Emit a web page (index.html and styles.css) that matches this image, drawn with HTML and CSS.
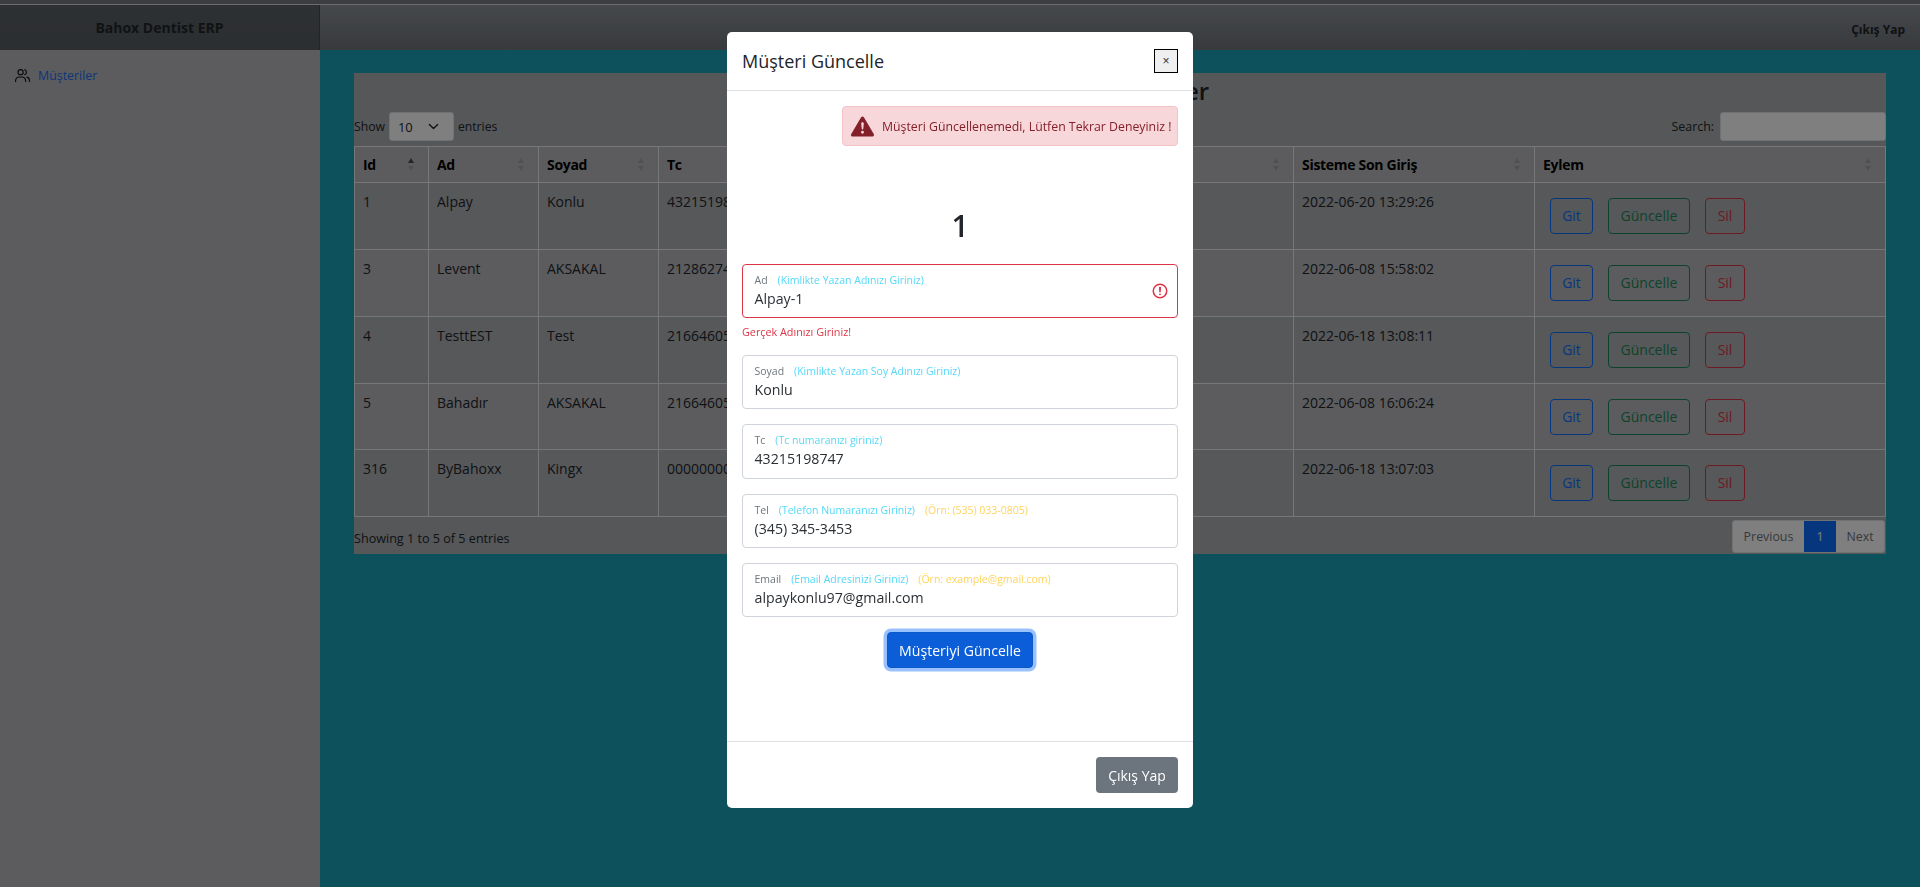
FILE: index.html
```html
<!DOCTYPE html>
<html lang="tr">
<head>
<meta charset="utf-8">
<title>Bahox Dentist ERP</title>
<link rel="stylesheet" href="styles.css">
</head>
<body>
<div class="topstrip"></div>
<div class="app">
  <aside class="sidebar">
    <div class="brand">Bahox Dentist ERP</div>
    <nav class="nav">
      <a class="nav-link" href="#">
        <svg class="nav-icon" viewBox="0 0 15 13" fill="none" stroke="currentColor" stroke-width="1.1" stroke-linecap="round"><circle cx="5.6" cy="3.2" r="2.6"/><path d="M.6 13v-1.4A3.5 3.5 0 0 1 4.1 8h3a3.5 3.5 0 0 1 3.5 3.6V13"/><path d="M9.6.7a2.6 2.6 0 0 1 0 5"/><path d="M12 8.1a3.3 3.3 0 0 1 2.4 3.2V13"/></svg>
        <span>Müşteriler</span>
      </a>
    </nav>
  </aside>
  <div class="main">
    <header class="topbar"><a class="logout" href="#">Çıkış Yap</a></header>
    <section class="content">
      <div class="card">
        <h3 class="card-title">Tüm Müşteriler</h3>
        <div class="controls">
          <div class="length">Show <span class="select">10<svg class="chev" viewBox="0 0 16 16" fill="none" stroke="currentColor" stroke-width="2" stroke-linecap="round" stroke-linejoin="round"><path d="M2 5l6 6 6-6"/></svg></span> entries</div>
          <div class="search">Search: <span class="search-input"></span></div>
        </div>
        <table class="table">
          <colgroup><col class="c1"><col class="c2"><col class="c3"><col class="c4"><col class="c5"><col class="c6"><col class="c8"><col class="c9"></colgroup>
          <thead>
            <tr>
              <th><div class="th"><span>Id</span><i class="sort asc"><b></b><b></b></i></div></th>
              <th><div class="th"><span>Ad</span><i class="sort"><b></b><b></b></i></div></th>
              <th><div class="th"><span>Soyad</span><i class="sort"><b></b><b></b></i></div></th>
              <th><div class="th"><span>Tc</span><i class="sort"><b></b><b></b></i></div></th>
              <th><div class="th"><span>Tel</span><i class="sort"><b></b><b></b></i></div></th>
              <th><div class="th"><span>Email</span><i class="sort"><b></b><b></b></i></div></th>
              <th><div class="th"><span>Sisteme Son Giriş</span><i class="sort"><b></b><b></b></i></div></th>
              <th><div class="th"><span>Eylem</span><i class="sort"><b></b><b></b></i></div></th>
            </tr>
          </thead>
          <tbody>
            <tr class="odd"><td>1</td><td>Alpay</td><td>Konlu</td><td>43215198747</td><td></td><td></td><td>2022-06-20 13:29:26</td><td class="act"><a class="btn blue">Git</a><a class="btn green">Güncelle</a><a class="btn red">Sil</a></td></tr>
            <tr><td>3</td><td>Levent</td><td>AKSAKAL</td><td>21286274000</td><td></td><td></td><td>2022-06-08 15:58:02</td><td class="act"><a class="btn blue">Git</a><a class="btn green">Güncelle</a><a class="btn red">Sil</a></td></tr>
            <tr class="odd"><td>4</td><td>TesttEST</td><td>Test</td><td>21664605000</td><td></td><td></td><td>2022-06-18 13:08:11</td><td class="act"><a class="btn blue">Git</a><a class="btn green">Güncelle</a><a class="btn red">Sil</a></td></tr>
            <tr class="short"><td>5</td><td>Bahadır</td><td>AKSAKAL</td><td>21664605000</td><td></td><td></td><td>2022-06-08 16:06:24</td><td class="act"><a class="btn blue">Git</a><a class="btn green">Güncelle</a><a class="btn red">Sil</a></td></tr>
            <tr class="odd"><td>316</td><td>ByBahoxx</td><td>Kingx</td><td>00000000000</td><td></td><td></td><td>2022-06-18 13:07:03</td><td class="act"><a class="btn blue">Git</a><a class="btn green">Güncelle</a><a class="btn red">Sil</a></td></tr>
          </tbody>
        </table>
        <div class="table-foot">
          <div class="info">Showing 1 to 5 of 5 entries</div>
          <div class="pager"><span class="page prev">Previous</span><span class="page on">1</span><span class="page next">Next</span></div>
        </div>
      </div>
    </section>
  </div>
</div>

<div class="backdrop">
  <div class="modal">
    <div class="modal-head">
      <h5 class="modal-title">Müşteri Güncelle</h5>
      <button class="close" type="button">×</button>
    </div>
    <div class="modal-body">
      <div class="alert">
        <svg class="alert-icon" viewBox="0 0 16 16" fill="currentColor"><path d="M8.982 1.566a1.13 1.13 0 0 0-1.96 0L.165 13.233c-.457.778.091 1.767.98 1.767h13.713c.889 0 1.438-.99.98-1.767L8.982 1.566zM8 5c.535 0 .954.462.9.995l-.35 3.507a.552.552 0 0 1-1.1 0L7.1 5.995A.905.905 0 0 1 8 5zm.002 6a1 1 0 1 1 0 2 1 1 0 0 1 0-2z"/></svg>
        <span>Müşteri Güncellenemedi, Lütfen Tekrar Deneyiniz !</span>
      </div>
      <div class="number">1</div>
      <div class="field invalid">
        <div class="field-label"><span>Ad</span><span class="hint">(Kimlikte Yazan Adınızı Giriniz)</span></div>
        <div class="field-value">Alpay-1</div>
        <svg class="invalid-icon" viewBox="0 0 12 12" fill="none" stroke="#dc3545"><circle cx="6" cy="6" r="4.5"/><path stroke-linejoin="round" d="M5.8 3.6h.4L6 6.5z"/><circle cx="6" cy="8.2" r=".6" fill="#dc3545" stroke="none"/></svg>
      </div>
      <div class="error">Gerçek Adınızı Giriniz!</div>
      <div class="field">
        <div class="field-label"><span>Soyad</span><span class="hint">(Kimlikte Yazan Soy Adınızı Giriniz)</span></div>
        <div class="field-value">Konlu</div>
      </div>
      <div class="field">
        <div class="field-label"><span>Tc</span><span class="hint">(Tc numaranızı giriniz)</span></div>
        <div class="field-value">43215198747</div>
      </div>
      <div class="field">
        <div class="field-label"><span>Tel</span><span class="hint">(Telefon Numaranızı Giriniz)</span><span class="example">(Örn: (535) 033-0805)</span></div>
        <div class="field-value">(345) 345-3453</div>
      </div>
      <div class="field">
        <div class="field-label"><span>Email</span><span class="hint">(Email Adresinizi Giriniz)</span><span class="example">(Örn: example@gmail.com)</span></div>
        <div class="field-value">alpaykonlu97@gmail.com</div>
      </div>
      <div class="submit-row"><button class="submit" type="button">Müşteriyi Güncelle</button></div>
    </div>
    <div class="modal-foot"><button class="exit" type="button">Çıkış Yap</button></div>
  </div>
</div>
</body>
</html>
```

FILE: styles.css
```css
* { box-sizing: border-box; }
html, body { margin: 0; height: 887px; overflow: hidden; }
body {
  font-family: "Open Sans", "Liberation Sans", sans-serif;
  font-size: 13px;
  color: #212529;
  background: #1aa2b8;
  display: flex;
  flex-direction: column;
}
a { text-decoration: none; }

.topstrip { height: 5px; flex: none; background: #767a80; border-bottom: 1px solid #d4d8dc; }
.app { flex: 1; display: flex; min-height: 0; }

.sidebar { width: 320px; flex: none; background: #b8b9bd; }
.brand {
  height: 45px;
  background: linear-gradient(#5c6166, #585d62);
  border-right: 1px solid #44484c;
  display: flex;
  align-items: center;
  justify-content: center;
  font-weight: 700;
  font-size: 14px;
}
.nav { padding: 19px 15px; }
.nav-link { display: flex; align-items: center; gap: 8px; color: #1a6cf0; font-size: 12.4px; line-height: 13px; }
.nav-icon { width: 15px; height: 13px; color: #111; flex: none; }

.main { flex: 1; min-width: 0; display: flex; flex-direction: column; }
.topbar {
  height: 45px;
  flex: none;
  background: linear-gradient(#8c9197, #6f7379);
  display: flex;
  align-items: center;
  justify-content: flex-end;
  padding: 3px 15px 0 0;
}
.logout { color: #212529; font-weight: 700; font-size: 12px; }

.content { flex: 1; padding: 23px 34px 0; }
.card { background: #aaaeb2; height: 481px; }
.card-title { margin: 0; height: 36px; line-height: 36px; text-align: center; font-size: 24px; font-weight: 600; }
.controls { display: flex; justify-content: space-between; align-items: center; margin-top: 3px; height: 29px; font-size: 12.4px; }
.length { display: flex; align-items: center; gap: 4px; font-size: 12.2px; }
.select {
  width: 65px; height: 29px;
  background: #fff;
  border: 1px solid #dee2e6;
  border-radius: 3px;
  display: flex; align-items: center; justify-content: space-between;
  padding: 0 14px 0 8px;
  font-size: 13px;
}
.chev { width: 11px; height: 11px; }
.search { display: flex; align-items: center; gap: 6px; }
.search-input { width: 166px; height: 29px; background: #fff; border: 1px solid #dee2e6; border-radius: 3px; }

.table { width: 1531px; margin-top: 5px; table-layout: fixed; border-collapse: collapse; background: #b8b9bd; }
.c1 { width: 74px; } .c2 { width: 110px; } .c3 { width: 120px; }
.c4 { width: 190px; } .c5 { width: 190px; } .c6 { width: 255px; }
.c8 { width: 241px; } .c9 { width: 351px; }
th, td { border: 1px solid #eceef0; }
th { height: 36px; padding: 0 8px; font-size: 14px; letter-spacing: -.3px; font-weight: 700; color: #000; text-align: left; }
.th { display: flex; justify-content: space-between; align-items: center; padding-right: 6px; }
.sort { display: flex; flex-direction: column; gap: 3px; }
.sort b { display: block; width: 0; height: 0; border-left: 3px solid transparent; border-right: 3px solid transparent; }
.sort b:first-child { border-bottom: 5px solid rgba(0,0,0,.13); }
.sort b:last-child { border-top: 5px solid rgba(0,0,0,.13); }
.sort.asc b:first-child { border-bottom-color: rgba(0,0,0,.6); }
td { height: 67px; padding: 8px; vertical-align: top; font-size: 14px; line-height: 21px; white-space: nowrap; overflow: hidden; }
tr.short td { height: 66px; }
tr.odd td { background: #aeb0b4; }
td.act { padding: 15px 8px 0 15px; }
.btn { display: inline-block; height: 36px; line-height: 34px; text-align: center; border: 1px solid; border-radius: 4px; margin-right: 15px; font-size: 14px; }
.blue { color: #0d6efd; width: 43px; }
.green { color: #198754; width: 82px; }
.red { color: #dc3545; width: 40px; }

.table-foot { display: flex; justify-content: space-between; align-items: center; height: 38px; padding: 3px 1px 2px 0; font-size: 12.6px; }
.info { padding-top: 3px; }
.pager { display: flex; height: 33px; border: 1px solid #dee2e6; border-radius: 3px; overflow: hidden; background: #fff; }
.page { display: flex; align-items: center; justify-content: center; color: #6c757d; font-size: 12.4px; }
.prev { width: 71px; }
.on { width: 32px; background: #0d6efd; color: #fff; }
.next { width: 48px; }

.backdrop { position: fixed; inset: 0; background: rgba(0,0,0,.5); display: flex; justify-content: center; align-items: flex-start; padding-top: 32px; }
.modal { width: 466px; height: 776px; background: #fff; border-radius: 5px; display: flex; flex-direction: column; }
.modal-head { height: 59px; flex: none; border-bottom: 1px solid #dee2e6; padding: 0 15px; display: flex; align-items: center; justify-content: space-between; }
.modal-title { margin: 0; font-size: 18px; font-weight: 500; color: #212529; }
.close { width: 24px; height: 24px; padding: 0; background: #efefef; border: 1.5px solid #000; font-size: 12px; line-height: 1; color: #333; }
.modal-body { flex: 1; padding: 15px 15px 0; display: flex; flex-direction: column; }
.alert { align-self: flex-end; width: 336px; height: 40px; background: #f8d7da; border: 1px solid #f5c2c7; border-radius: 4px; color: #842029; display: flex; align-items: center; gap: 8px; padding-left: 8px; font-size: 12.3px; white-space: nowrap; }
.alert-icon { width: 23px; height: 23px; flex: none; }
.number { margin-top: 60px; height: 40px; line-height: 40px; text-align: center; font-size: 30px; font-weight: 600; margin-bottom: 18px; }
.field { position: relative; height: 54.33px; flex: none; border: 1px solid #ced4da; border-radius: 4px; padding: 8px 11.5px 0; margin-bottom: 15px; }
.field.invalid { border-color: #dc3545; margin-bottom: 0; }
.field-label { display: flex; gap: 10px; height: 14px; line-height: 14px; font-size: 10.5px; color: #6c757d; white-space: nowrap; }
.hint { color: #55d8f8; }
.example { color: #ffd35c; }
.field-value { height: 20px; line-height: 20px; margin-top: 2px; font-size: 14.2px; color: #2b3035; }
.invalid-icon { position: absolute; right: 8px; top: 17px; width: 18px; height: 18px; }
.error { height: 36.67px; padding-top: 6px; line-height: 16px; font-size: 10.8px; color: #dc3545; }
.submit-row { display: flex; justify-content: center; }
.submit { width: 146px; height: 36px; padding: 0; border: 1px solid #0a58ca; border-radius: 4px; background: #0b5ed7; color: #fff; font: inherit; font-size: 14.1px; box-shadow: 0 0 0 3.5px #98c1fe; }
.modal-foot { height: 67px; flex: none; border-top: 1px solid #dee2e6; padding: 15px; display: flex; justify-content: flex-end; }
.exit { width: 82px; height: 36px; padding: 0; border: 0; border-radius: 4px; background: #6c757d; color: #fff; font: inherit; font-size: 14px; }
```
